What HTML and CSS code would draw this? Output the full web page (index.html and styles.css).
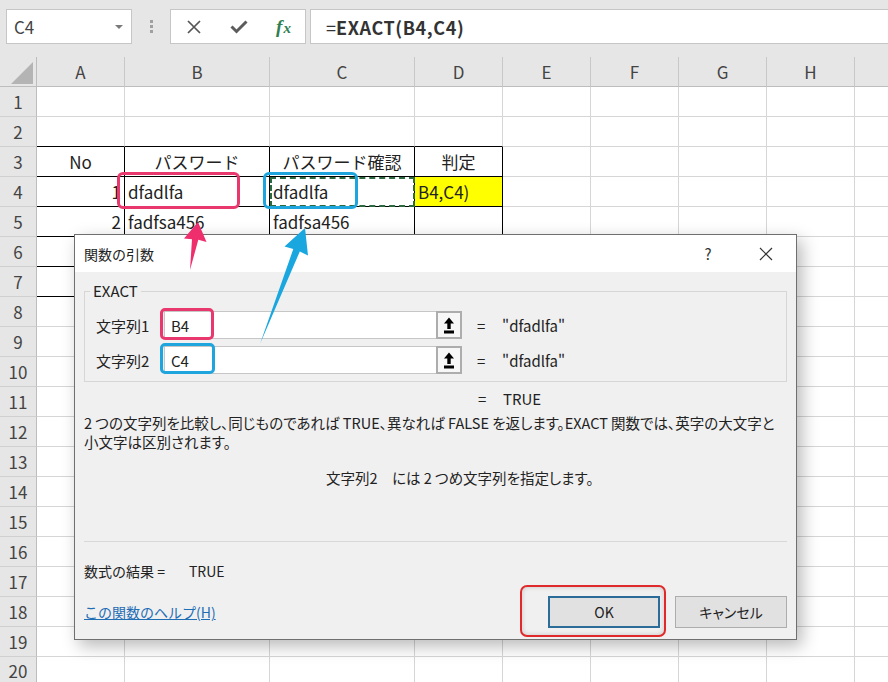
FILE: index.html
```html
<!DOCTYPE html>
<html lang="ja">
<head>
<meta charset="utf-8">
<title>関数の引数</title>
<link rel="stylesheet" href="styles.css">
</head>
<body>
<div class="app">
  <div class="topbar">
    <div class="namebox"><span>C4</span><span class="caret"></span></div>
    <div class="grip"><i></i><i></i><i></i></div>
    <div class="fxbox">
      <span class="ib"><svg width="14" height="14" viewBox="0 0 14 14"><path d="M1 1L13 13M13 1L1 13" stroke="#555" stroke-width="1.7" fill="none"/></svg></span>
      <span class="ib"><svg width="18" height="14" viewBox="0 0 18 14"><path d="M1.5 6.5L6.5 11.5L16.5 1.5" stroke="#5c5c5c" stroke-width="3" fill="none"/></svg></span>
      <span class="ib fx"><span class="fx-f">f</span><span class="fx-x">x</span></span>
    </div>
    <div class="formula"><span class="eq">=</span><b>EXACT(B4,C4)</b></div>
  </div>

  <div class="sheet">
    <div class="corner"></div><div class="h">A</div><div class="h">B</div><div class="h">C</div><div class="h">D</div><div class="h">E</div><div class="h">F</div><div class="h">G</div><div class="h">H</div><div class="h"></div>

    <div class="r">1</div><div class="c"></div><div class="c"></div><div class="c"></div><div class="c"></div><div class="c"></div><div class="c"></div><div class="c"></div><div class="c"></div><div class="c"></div>
    <div class="r">2</div><div class="c tb"></div><div class="c tb"></div><div class="c tb"></div><div class="c tb"></div><div class="c"></div><div class="c"></div><div class="c"></div><div class="c"></div><div class="c"></div>
    <div class="r">3</div><div class="c t ctr">No</div><div class="c t ctr">パスワード</div><div class="c t ctr">パスワード確認</div><div class="c t ctr">判定</div><div class="c"></div><div class="c"></div><div class="c"></div><div class="c"></div><div class="c"></div>
    <div class="r">4</div><div class="c t num">1</div><div class="c t">dfadlfa</div><div class="c t ants">dfadlfa</div><div class="c t yel">B4,C4)</div><div class="c"></div><div class="c"></div><div class="c"></div><div class="c"></div><div class="c"></div>
    <div class="r">5</div><div class="c t num">2</div><div class="c t">fadfsa456</div><div class="c t">fadfsa456</div><div class="c t"></div><div class="c"></div><div class="c"></div><div class="c"></div><div class="c"></div><div class="c"></div>
    <div class="r">6</div><div class="c t"></div><div class="c t"></div><div class="c t"></div><div class="c t"></div><div class="c"></div><div class="c"></div><div class="c"></div><div class="c"></div><div class="c"></div>
    <div class="r">7</div><div class="c t"></div><div class="c t"></div><div class="c t"></div><div class="c t"></div><div class="c"></div><div class="c"></div><div class="c"></div><div class="c"></div><div class="c"></div>
    <div class="r">8</div><div class="c"></div><div class="c"></div><div class="c"></div><div class="c"></div><div class="c"></div><div class="c"></div><div class="c"></div><div class="c"></div><div class="c"></div>
    <div class="r">9</div><div class="c"></div><div class="c"></div><div class="c"></div><div class="c"></div><div class="c"></div><div class="c"></div><div class="c"></div><div class="c"></div><div class="c"></div>
    <div class="r">10</div><div class="c"></div><div class="c"></div><div class="c"></div><div class="c"></div><div class="c"></div><div class="c"></div><div class="c"></div><div class="c"></div><div class="c"></div>
    <div class="r">11</div><div class="c"></div><div class="c"></div><div class="c"></div><div class="c"></div><div class="c"></div><div class="c"></div><div class="c"></div><div class="c"></div><div class="c"></div>
    <div class="r">12</div><div class="c"></div><div class="c"></div><div class="c"></div><div class="c"></div><div class="c"></div><div class="c"></div><div class="c"></div><div class="c"></div><div class="c"></div>
    <div class="r">13</div><div class="c"></div><div class="c"></div><div class="c"></div><div class="c"></div><div class="c"></div><div class="c"></div><div class="c"></div><div class="c"></div><div class="c"></div>
    <div class="r">14</div><div class="c"></div><div class="c"></div><div class="c"></div><div class="c"></div><div class="c"></div><div class="c"></div><div class="c"></div><div class="c"></div><div class="c"></div>
    <div class="r">15</div><div class="c"></div><div class="c"></div><div class="c"></div><div class="c"></div><div class="c"></div><div class="c"></div><div class="c"></div><div class="c"></div><div class="c"></div>
    <div class="r">16</div><div class="c"></div><div class="c"></div><div class="c"></div><div class="c"></div><div class="c"></div><div class="c"></div><div class="c"></div><div class="c"></div><div class="c"></div>
    <div class="r">17</div><div class="c"></div><div class="c"></div><div class="c"></div><div class="c"></div><div class="c"></div><div class="c"></div><div class="c"></div><div class="c"></div><div class="c"></div>
    <div class="r">18</div><div class="c"></div><div class="c"></div><div class="c"></div><div class="c"></div><div class="c"></div><div class="c"></div><div class="c"></div><div class="c"></div><div class="c"></div>
    <div class="r">19</div><div class="c"></div><div class="c"></div><div class="c"></div><div class="c"></div><div class="c"></div><div class="c"></div><div class="c"></div><div class="c"></div><div class="c"></div>
    <div class="r r20">20</div><div class="c"></div><div class="c"></div><div class="c"></div><div class="c"></div><div class="c"></div><div class="c"></div><div class="c"></div><div class="c"></div><div class="c"></div>
  </div>

  <div class="dialog">
    <div class="dtitle">
      <span class="dt-text">関数の引数</span>
      <span class="dt-help">?</span>
      <span class="dt-close"><svg width="14" height="14" viewBox="0 0 14 14"><path d="M1 1L13 13M13 1L1 13" stroke="#333" stroke-width="1.2" fill="none"/></svg></span>
    </div>
    <div class="dbody">
      <div class="group">
        <div class="glabel">EXACT</div>
        <div class="arow">
          <span class="alabel">文字列1</span>
          <span class="inp">B4</span>
          <span class="pick"><svg width="12" height="17" viewBox="0 0 12 17"><path d="M6 0.5L1 6.5H4.3V12H7.7V6.5H11Z" fill="#000"/><rect x="1" y="13.5" width="10" height="3" fill="#000"/></svg></span>
          <span class="aeq">=</span>
          <span class="aval">"dfadlfa"</span>
        </div>
        <div class="arow arow2">
          <span class="alabel">文字列2</span>
          <span class="inp">C4</span>
          <span class="pick"><svg width="12" height="17" viewBox="0 0 12 17"><path d="M6 0.5L1 6.5H4.3V12H7.7V6.5H11Z" fill="#000"/><rect x="1" y="13.5" width="10" height="3" fill="#000"/></svg></span>
          <span class="aeq">=</span>
          <span class="aval">"dfadlfa"</span>
        </div>
      </div>
      <div class="res"><span class="aeq0">=</span><span>TRUE</span></div>
      <p class="desc">2 つの文字列を比較し、同じものであれば TRUE、異なれば FALSE を返します。EXACT 関数では、英字の大文字と<br>小文字は区別されます。</p>
      <p class="hint">文字列2　には 2 つめ文字列を指定します。</p>
      <div class="sep"></div>
      <p class="formres">数式の結果 =<span class="fr-val">TRUE</span></p>
      <div class="foot">
        <a class="link">この関数のヘルプ(H)</a>
        <span class="btn ok">OK</span>
        <span class="btn">キャンセル</span>
      </div>
    </div>
  </div>

  <div class="marks">
    <div class="box pink sheet-b4"></div>
    <div class="box blue sheet-c4"></div>
    <div class="box pink dlg-b4"></div>
    <div class="box blue dlg-c4"></div>
    <div class="okmark"></div>
    <svg class="arrows" width="888" height="682" viewBox="0 0 888 682">
      <polygon points="198,222 206.5,242 198.3,239.8 190,270 192,239.3 184,238.5" fill="#ef2e6d"/>
      <polygon points="305,228 308,255.5 299.8,251.5 260,344 293.3,249 284.5,246.5" fill="#1aa7e0"/>
    </svg>
  </div>
</div>
</body>
</html>
```

FILE: styles.css
```css
* { box-sizing: border-box; }
html, body { margin: 0; padding: 0; }
body {
  width: 888px;
  height: 682px;
  overflow: hidden;
  background: #fff;
  font-family: "Noto Sans CJK JP", "Noto Sans", sans-serif;
  color: #222;
}
.app { position: relative; width: 888px; height: 682px; overflow: hidden; }

/* formula bar */
.topbar {
  height: 57px;
  background: #e6e6e6;
  display: flex;
  align-items: flex-start;
  padding: 9px 0 0 6px;
}
.namebox {
  width: 126px;
  height: 35px;
  background: #fff;
  border: 1px solid #c6c6c6;
  display: flex;
  align-items: center;
  justify-content: space-between;
  padding: 0 8px 0 7px;
  font-size: 17px;
  color: #444;
}
.caret {
  width: 0; height: 0;
  border-left: 4px solid transparent;
  border-right: 4px solid transparent;
  border-top: 4px solid #7a7a7a;
}
.grip { margin: 11px 0 0 18px; display: flex; flex-direction: column; gap: 2px; }
.grip i { display: block; width: 3px; height: 3px; background: #a0a0a0; }
.fxbox {
  margin-left: 17px;
  width: 136px;
  height: 35px;
  background: #fff;
  border: 1px solid #c6c6c6;
  display: grid;
  grid-template-columns: 45px 45px 45px;
  align-items: center;
}
.ib { display: flex; justify-content: center; align-items: center; }
.ib.fx { align-items: baseline; }
.fx { font-family: "Liberation Serif", serif; font-style: italic; font-weight: bold; color: #2f7f52; line-height: 1; }
.fx-f { font-size: 19px; }
.fx-x { font-size: 15px; margin-left: 1px; }
.formula {
  margin-left: 4px;
  flex: 1;
  height: 35px;
  background: #fff;
  border: 1px solid #c6c6c6;
  border-right: none;
  display: flex;
  align-items: center;
  padding-left: 15px;
  font-size: 18px;
  color: #333;
}
.formula b { font-weight: bold; letter-spacing: 0.6px; }

/* sheet */
.sheet {
  display: grid;
  grid-template-columns: 37px 88px 145px 145px 88px 88px 88px 88px 88px 40px;
  grid-auto-rows: 30px;
  font-size: 17px;
}
.corner { background: #e6e6e6; border-right: 1px solid #bdbdbd; border-bottom: 1px solid #bdbdbd; position: relative; }
.corner::after {
  content: "";
  position: absolute;
  left: 11px; top: 5px;
  width: 22px; height: 22px;
  background: #b4b4b4;
  clip-path: polygon(100% 0, 100% 100%, 0 100%);
}
.h {
  background: #e6e6e6;
  border-right: 1px solid #c8c8c8;
  border-bottom: 1px solid #bdbdbd;
  display: flex; align-items: center; justify-content: center;
  color: #444;
}
.r {
  background: #e6e6e6;
  border-right: 1px solid #bdbdbd;
  border-bottom: 1px solid #d0d0d0;
  display: flex; align-items: center; justify-content: center;
  color: #444;
}
.r20 { align-items: flex-start; padding-top: 2px; line-height: 24px; }
.c {
  border-right: 1px solid #d6d6d6;
  border-bottom: 1px solid #d6d6d6;
  display: flex; align-items: center;
  padding: 0 3px;
  white-space: nowrap;
  color: #222;
}
.c.tb { border-bottom-color: #000; }
.c.t { border-right-color: #000; border-bottom-color: #000; }
.ctr { justify-content: center; }
.num { justify-content: flex-end; }
.yel { background: #ffff00; }
.ants { outline: 2px dashed #2a6a3e; outline-offset: -2px; }

/* dialog */
.dialog {
  position: absolute;
  left: 74px; top: 234px;
  width: 723px; height: 406px;
  border: 1px solid #6f6f6f;
  background: #f0f0f0;
  box-shadow: 5px 6px 16px rgba(0, 0, 0, 0.28);
  display: flex;
  flex-direction: column;
}
.dtitle {
  height: 37px;
  background: #fff;
  display: flex;
  align-items: center;
  padding-left: 9px;
  font-size: 14px;
  color: #222;
}
.dt-text { flex: 1; }
.dt-help { width: 56px; text-align: center; font-size: 15px; color: #333; }
.dt-close { width: 60px; display: flex; justify-content: center; }
.dbody { flex: 1; padding: 0 9px; font-size: 14px; color: #222; }
.group {
  margin-top: 19px;
  border: 1px solid #d6d6d6;
  padding: 0 0 7px 0;
}
.glabel {
  width: fit-content;
  margin: -11px 0 0 5px;
  padding: 0 3px;
  background: #f0f0f0;
  line-height: 20px;
  font-size: 15px;
}
.arow { display: flex; align-items: center; height: 28px; margin-top: 10px; padding-left: 11px; font-size: 15px; }
.arow2 { margin-top: 7px; }
.alabel { width: 68px; }
.inp {
  width: 272px; height: 28px;
  background: #fff;
  border: 1px solid #c6c6c6;
  border-right: none;
  display: flex; align-items: center;
  padding-left: 6px;
}
.pick {
  width: 26px; height: 28px;
  border: 2px solid #adadad;
  background: #f7f7f7;
  display: flex; align-items: center; justify-content: center;
}
.aeq { margin-left: 15px; width: 25px; }
.aeq0 { width: 25px; }
.res { margin: 8px 0 0 394px; height: 18px; line-height: 18px; font-size: 15px; display: flex; }
.desc { margin: 5px 0 0; line-height: 19px; white-space: nowrap; font-size: 14.5px; font-feature-settings: "palt"; }
.hint { margin: 17px 0 0 242px; line-height: 19px; font-size: 14.5px; font-feature-settings: "palt"; }
.sep { margin-top: 54px; border-top: 1px solid #d8d8d8; }
.formres { margin: 20px 0 0; line-height: 19px; }
.fr-val { margin-left: 24px; }
.foot { margin-top: 15px; height: 32px; display: flex; align-items: center; }
.link { margin-right: auto; color: #1f6db5; text-decoration: underline; }
.btn {
  width: 112px; height: 32px;
  display: flex; align-items: center; justify-content: center;
  background: #e1e1e1;
  border: 1px solid #adadad;
  color: #222;
  font-feature-settings: "palt";
}
.btn.ok { border: 2px solid #2c6c98; }
.btn + .btn { margin-left: 15px; }

/* annotations */
.marks { position: absolute; left: 0; top: 0; width: 888px; height: 682px; pointer-events: none; }
.box { position: absolute; border: 3px solid; border-radius: 6px; }
.pink { border-color: #e8386d; }
.blue { border-color: #1ea5de; }
.sheet-b4 { left: 117px; top: 172px; width: 123px; height: 37px; }
.sheet-c4 { left: 263px; top: 172px; width: 95px; height: 37px; }
.dlg-b4 { left: 160px; top: 308px; width: 54px; height: 32px; border-radius: 5px; }
.dlg-c4 { left: 160px; top: 343px; width: 55px; height: 31px; border-radius: 5px; }
.okmark {
  position: absolute;
  left: 520px; top: 585px;
  width: 146px; height: 52px;
  border: 2px solid #e0292b;
  border-radius: 7px;
  box-shadow: inset 0 0 5px rgba(0, 0, 0, 0.18);
}
.arrows { position: absolute; left: 0; top: 0; }
```
